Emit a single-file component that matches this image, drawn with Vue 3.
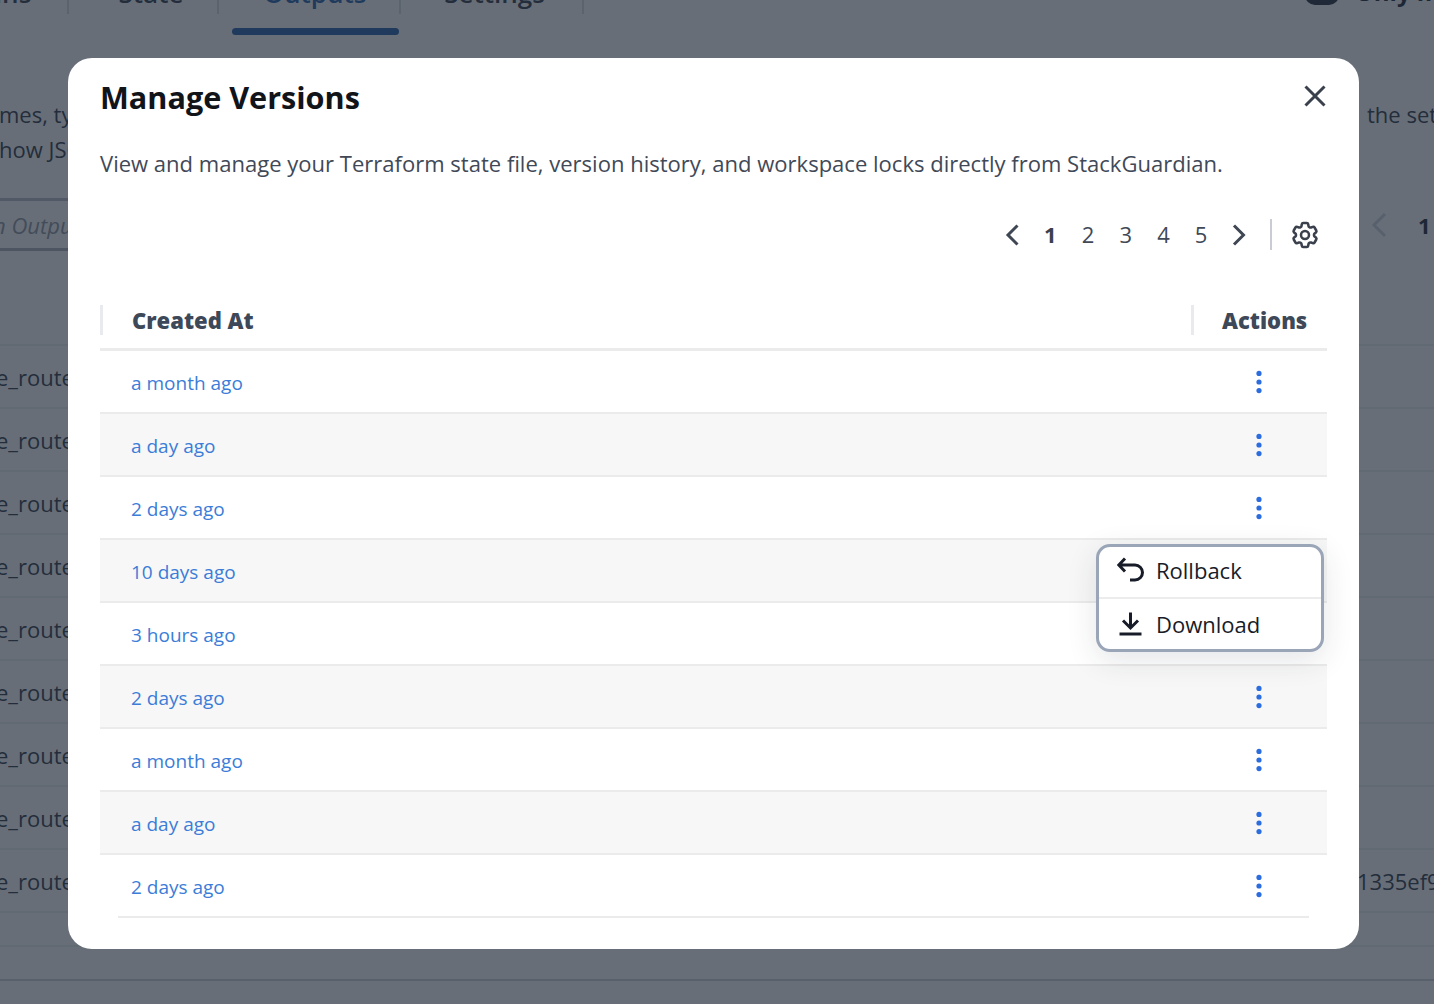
<script setup>
import { ref } from 'vue';

const tabs = ['Runs', 'State', 'Outputs', 'Settings'];
const pages = [1, 2, 3, 4, 5];
const page = ref(1);
const openMenu = ref(2);

const versions = [
    'a month ago',
    'a day ago',
    '2 days ago',
    '10 days ago',
    '3 hours ago',
    '2 days ago',
    'a month ago',
    'a day ago',
    '2 days ago',
];

// Rangées de la page derrière le modal
const bgRows = [...Array(9).keys()];
</script>

<template>
    <div class="page">
        <div class="tabs">
            <div v-for="(tab, i) in tabs" :key="tab" class="tab" :class="{ active: i === 2 }">
                <span class="tab-label">{{ tab }}</span>
            </div>
            <div class="only-my"><span class="pill"></span>Only my</div>
        </div>
        <div class="tab-indicator"></div>

        <div class="intro">
            <div class="intro-line"><span class="cut-left">mes, types and values</span><span class="cut-right">the settings</span></div>
            <div class="intro-line"><span class="cut-left">how JSON</span></div>
        </div>

        <div class="filter">
            <span class="filter-input">n Outputs</span>
            <div class="bg-pager">
                <svg width="22" height="28" viewBox="0 0 22 28" fill="none"><path d="M16 3 5 14l11 11" stroke="#cbd5e1" stroke-width="3" /></svg>
                <span>1</span>
            </div>
        </div>

        <div class="bg-rows">
            <div v-for="n in bgRows" :key="n" class="bg-row">
                <span class="bg-name">e_route_table</span>
                <span v-if="n === 8" class="bg-hash">1335ef90a</span>
            </div>
        </div>
        <div class="bg-foot"></div>
        <div class="bg-foot bg-foot-end"></div>
    </div>

    <div class="overlay">
        <div class="modal">
            <div class="modal-head">
                <h2 class="modal-title">Manage Versions</h2>
                <button class="close-btn" aria-label="Close">
                    <svg width="24" height="24" viewBox="0 0 24 24" fill="none">
                        <path d="M2.5 2.5l19 19M21.5 2.5l-19 19" stroke="#3a414d" stroke-width="3" />
                    </svg>
                </button>
            </div>
            <p class="modal-desc">View and manage your Terraform state file, version history, and workspace locks directly from StackGuardian.</p>

            <div class="pager">
                <button class="pager-arrow" aria-label="Previous">
                    <svg width="16" height="24" viewBox="0 0 16 24" fill="none"><path d="M12.500 2.500 3 12l9.500 9.500" stroke="#3f4754" stroke-width="3" /></svg>
                </button>
                <button
                    v-for="p in pages"
                    :key="p"
                    class="pager-num"
                    :class="{ current: p === page }"
                    @click="page = p"
                >{{ p }}</button>
                <button class="pager-arrow" aria-label="Next">
                    <svg width="16" height="24" viewBox="0 0 16 24" fill="none"><path d="M3 2.500 12.500 12 3 21.500" stroke="#3f4754" stroke-width="3" /></svg>
                </button>
                <span class="pager-sep"></span>
                <button class="gear-btn" aria-label="Settings">
                    <svg width="32" height="32" viewBox="0 0 24 24" fill="none" stroke="#3a414d" stroke-width="1.900" stroke-linejoin="round">
                        <path d="M9.594 3.94c.09-.542.56-.94 1.11-.94h2.593c.55 0 1.02.398 1.11.94l.213 1.281c.063.374.313.686.645.87.074.04.147.083.22.127.325.196.72.257 1.075.124l1.217-.456a1.125 1.125 0 0 1 1.37.49l1.296 2.247a1.125 1.125 0 0 1-.26 1.431l-1.003.827c-.293.241-.438.613-.43.992a7.723 7.723 0 0 1 0 .255c-.008.378.137.75.43.991l1.004.827c.424.35.534.955.26 1.43l-1.298 2.247a1.125 1.125 0 0 1-1.369.491l-1.217-.456c-.355-.133-.75-.072-1.076.124a6.47 6.47 0 0 1-.22.128c-.331.183-.581.495-.644.869l-.213 1.281c-.09.543-.56.94-1.11.94h-2.594c-.55 0-1.019-.398-1.11-.94l-.213-1.281c-.062-.374-.312-.686-.644-.87a6.52 6.52 0 0 1-.22-.127c-.325-.196-.72-.257-1.076-.124l-1.217.456a1.125 1.125 0 0 1-1.369-.49l-1.297-2.247a1.125 1.125 0 0 1 .26-1.431l1.004-.827c.292-.24.437-.613.43-.991a6.932 6.932 0 0 1 0-.255c.007-.38-.138-.751-.43-.992l-1.004-.827a1.125 1.125 0 0 1-.26-1.43l1.297-2.247a1.125 1.125 0 0 1 1.37-.491l1.216.456c.356.133.751.072 1.076-.124.072-.044.146-.086.22-.128.332-.183.582-.495.644-.869l.214-1.28Z" />
                        <circle cx="12" cy="12" r="3" />
                    </svg>
                </button>
            </div>

            <div class="table">
                <div class="thead">
                    <div class="th th-main">Created At</div>
                    <div class="th th-actions">Actions</div>
                </div>
                <div
                    v-for="(created, i) in versions"
                    :key="i"
                    class="row"
                    :class="{ striped: i % 2 === 1, last: i === versions.length - 1 }"
                >
                    <a class="row-link">{{ created }}</a>
                    <div class="row-actions">
                        <button class="dots" aria-label="Actions" @click="openMenu = openMenu === i ? -1 : i">
                            <svg width="8" height="26" viewBox="0 0 8 26" fill="#2b6cdf">
                                <circle cx="4" cy="4.400" r="2.600" />
                                <circle cx="4" cy="13" r="2.600" />
                                <circle cx="4" cy="21.600" r="2.600" />
                            </svg>
                        </button>
                        <div v-if="openMenu === i" class="menu">
                            <div class="menu-item">
                                <svg width="28" height="26" viewBox="0 0 28 26" fill="none" stroke="#171c28" stroke-width="3">
                                    <path d="M8 1.500 1.800 8 8 14.500M1.800 8H18a7.500 7.500 0 0 1 0 15h-5" />
                                </svg>
                                Rollback
                            </div>
                            <div class="menu-item">
                                <svg width="28" height="28" viewBox="0 0 28 28" fill="none" stroke="#171c28" stroke-width="3">
                                    <path d="M13.500 2.500V18M6 10.500l7.500 7.500 7.500-7.500" />
                                    <path d="M2.500 24h22" />
                                </svg>
                                Download
                            </div>
                        </div>
                    </div>
                </div>
            </div>
        </div>
    </div>
</template>

<style scoped>
.page {
    height: 1004px;
    overflow: hidden;
    background: #fff;
    color: #2d3748;
    font-family: "Open Sans", sans-serif;
    font-size: 22px;
}

.tabs {
    display: flex;
    height: 14px;
    overflow: hidden;
}

.tab {
    flex: 0 0 auto;
    height: 14px;
    box-sizing: border-box;
    border-right: 2px solid #d8dbe0;
    font-size: 26px;
    font-weight: 600;
    line-height: 0;
    text-align: center;
    color: #2d3748;
}

.tab-label {
    display: block;
    margin-top: -7px;
}

.tab:nth-child(1) {
    width: 69px;
    text-align: left;
    text-indent: -31px;
}

.tab:nth-child(2) {
    width: 150px;
    padding-left: 16px;
}

.tab:nth-child(3) {
    width: 182px;
    padding-left: 12px;
}

.tab:nth-child(4) {
    width: 183px;
    padding-left: 6px;
}

.tab.active {
    color: #1f5fae;
}

.only-my {
    display: flex;
    gap: 16px;
    margin-top: -23px;
    margin-right: -20px;
    margin-left: auto;
    font-size: 24px;
    font-weight: 700;
    line-height: 30px;
    color: #1a2233;
}

.pill {
    display: block;
    width: 34px;
    height: 28px;
    border-radius: 10px;
    background: #1f2a3c;
}

.tab-indicator {
    width: 167px;
    height: 7px;
    margin: 14px 0 0 232px;
    border-radius: 4px;
    background: #1f5fae;
}

.intro {
    margin-top: 62px;
    line-height: 35px;
    white-space: nowrap;
}

.intro-line {
    display: flex;
    justify-content: space-between;
    height: 35px;
}

.cut-left {
    margin-left: -1px;
}

.cut-right {
    width: 67px;
    overflow: hidden;
}

.filter {
    display: flex;
    justify-content: space-between;
    align-items: center;
    height: 53px;
    margin-top: 31px;
}

.filter-input {
    display: flex;
    align-items: center;
    width: 300px;
    height: 100%;
    box-sizing: border-box;
    border-top: 3px solid #b8bdc7;
    border-bottom: 3px solid #aab0bb;
    font-style: italic;
    color: #8f96a3;
    text-indent: -7px;
    white-space: nowrap;
}

.bg-pager {
    display: flex;
    align-items: center;
    gap: 27px;
    width: 65px;
    overflow: hidden;
    font-weight: 700;
    color: #1a2233;
}

.bg-rows {
    margin-top: 93px;
    border-top: 2px solid #eceef1;
}

.bg-row {
    display: flex;
    justify-content: space-between;
    align-items: center;
    height: 63px;
    box-sizing: border-box;
    border-bottom: 2px solid #eceef1;
    white-space: nowrap;
}

.bg-name {
    margin-left: -4px;
}

.bg-hash {
    width: 77px;
    overflow: hidden;
}

.bg-foot {
    height: 32px;
    border-bottom: 2px solid #eceef1;
}

.bg-foot-end {
    border-bottom-color: #d0d3d9;
}

.overlay {
    position: fixed;
    inset: 0;
    padding: 58px 0 0 68px;
    background: rgba(31, 41, 55, 0.68);
    font-family: "Open Sans", sans-serif;
}

.modal {
    display: flex;
    flex-direction: column;
    width: 1291px;
    height: 891px;
    box-sizing: border-box;
    padding: 0 32px;
    border-radius: 24px;
    background: #fff;
}

.modal-head {
    display: flex;
    justify-content: space-between;
    align-items: center;
    height: 78px;
}

.modal-title {
    margin: 0;
    font-size: 30.600px;
    font-weight: 700;
    color: #111418;
}

button {
    padding: 0;
    border: 0;
    background: none;
    font-family: inherit;
    cursor: pointer;
}

.close-btn {
    display: flex;
    margin: 0 0 3px;
}

.modal-desc {
    margin: 11px 0 0;
    font-size: 22.040px;
    line-height: 32px;
    color: #414957;
}

.pager {
    display: flex;
    justify-content: flex-end;
    align-items: center;
    height: 32px;
    margin-top: 39px;
    padding-right: 6px;
    color: #414957;
}

.pager-arrow {
    display: flex;
    justify-content: center;
    width: 38px;
    margin-top: 1px;
}

.pager-num {
    width: 37.700px;
    font-size: 22px;
    color: #414957;
}

.pager-num.current {
    font-weight: 700;
    color: #3a414d;
}

.pager-sep {
    width: 2px;
    height: 31px;
    margin: 0 17px 0 12px;
    background: #c9ccd3;
}

.gear-btn {
    display: flex;
    margin-top: 2px;
}

.table {
    margin-top: 55px;
}

.thead {
    display: flex;
    align-items: flex-start;
    height: 43px;
    border-bottom: 3px solid #ebebeb;
}

.th {
    height: 30px;
    box-sizing: border-box;
    border-left: 3px solid #e8eaed;
    font-size: 22px;
    font-weight: 800;
    line-height: 30px;
    color: #3d4858;
}

.th-main {
    flex: 1;
    padding-left: 29px;
}

.th-actions {
    width: 136px;
    padding-left: 28px;
}

.row {
    display: flex;
    align-items: center;
    justify-content: space-between;
    height: 63px;
    box-sizing: border-box;
    padding-left: 31px;
    border-bottom: 2px solid #ebebeb;
}

.row.striped {
    background: #f7f7f7;
}

.row.last {
    border-bottom-color: transparent;
    background-image: linear-gradient(#ebebeb, #ebebeb);
    background-repeat: no-repeat;
    background-size: 1191px 2px;
    background-position: 18px 100%;
    background-origin: border-box;
}

.row-link {
    padding-top: 3px;
    font-size: 19px;
    color: #3b7dd8;
}

.row-actions {
    position: relative;
    display: flex;
    justify-content: center;
    width: 136px;
}

.dots {
    display: flex;
    margin-top: 1px;
}

.menu {
    position: absolute;
    top: 50px;
    right: 3px;
    z-index: 2;
    width: 228px;
    box-sizing: border-box;
    border: 3px solid #9aa5b8;
    border-radius: 14px;
    background: #fff;
    box-shadow: 0 8px 30px rgba(31, 41, 55, 0.12);
    font-size: 22px;
    color: #171c28;
}

.menu-item {
    display: flex;
    align-items: center;
    gap: 11px;
    height: 50px;
    padding-left: 18px;
}

.menu-item:first-child {
    padding-bottom: 4px;
    box-sizing: border-box;
}

.menu-item + .menu-item {
    border-top: 2px solid #ececec;
}
</style>

<style>
html,
body {
    margin: 0;
    overflow: hidden;
}
</style>
